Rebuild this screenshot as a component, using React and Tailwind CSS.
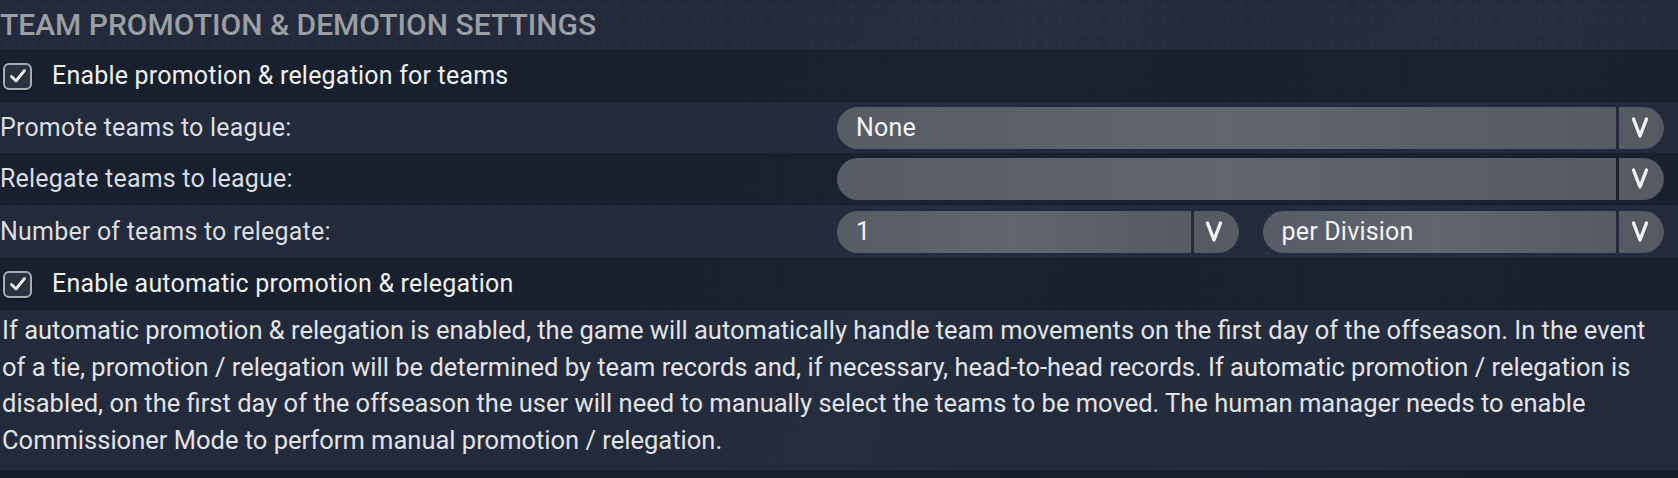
import React from 'react';

const Chevron = () => (
    <svg width="18" height="24" viewBox="0 0 18 24" className="block">
        <path d="M2.5 3 L9 20 L15.5 3" fill="none" stroke="#f2f2f2" strokeWidth="3.4" strokeLinecap="round" strokeLinejoin="round" />
    </svg>
);

function Dropdown({ value }) {
    return (
        <div className="flex h-[42px] flex-1 min-w-0">
            <div className="flex flex-1 items-center rounded-l-full bg-gradient-to-r from-[#575c66] via-[#60656f] to-[#555a63] pl-[19px] text-[25px] tracking-[0.2px] text-[#f4f4f4]">
                {value}
            </div>
            <div className="ml-[3px] flex w-[45px] items-center justify-center rounded-r-full bg-[#555a63] pr-[4px]">
                <Chevron />
            </div>
        </div>
    );
}

function Checkbox() {
    return (
        <div className="ml-[3px] flex h-[27px] w-[29px] items-center justify-center rounded-[6px] border-[2.5px] border-[#a9adb4] bg-[#2a3140] shadow-[0_1px_2px_rgba(0,0,0,0.6)]">
            <svg width="18" height="16" viewBox="0 0 18 16">
                <path d="M2.5 8.5 L7 13 L15.5 2.5" fill="none" stroke="#eeeeee" strokeWidth="2.8" strokeLinecap="round" strokeLinejoin="round" />
            </svg>
        </div>
    );
}

export default function App() {
    const light = 'bg-[#242c3d]/70';
    const dark = 'bg-[#141a27]/60';

    return (
        <div
            className="h-[478px] w-[1678px] overflow-hidden bg-[#1f2738] bg-[radial-gradient(circle,rgba(120,140,190,0.07)_2px,transparent_2.5px)] bg-[size:13px_13px]"
            style={{ fontFamily: 'Roboto, "Liberation Sans", sans-serif' }}
        >
            <div className="h-full w-full bg-[linear-gradient(115deg,transparent_40%,rgba(255,255,255,0.03)_55%,transparent_65%,rgba(255,255,255,0.025)_80%,transparent_90%)]">
                <div className="flex h-[50px] items-center bg-[#283042]/40 pb-[2px] text-[30px] font-medium text-[#9c9ea3]">
                    TEAM PROMOTION &amp; DEMOTION SETTINGS
                </div>

                <div className={`flex h-[52px] items-center gap-[20px] ${dark}`}>
                    <Checkbox />
                    <span className="text-[25px] tracking-[0.2px] text-[#f0f0f0]">Enable promotion &amp; relegation for teams</span>
                </div>

                <div className={`flex h-[51px] items-center pr-[14px] ${light}`}>
                    <span className="w-[837px] shrink-0 text-[25px] tracking-[0.2px] text-[#dcdde0]">Promote teams to league:</span>
                    <Dropdown value="None" />
                </div>

                <div className={`flex h-[52px] items-center pr-[14px] ${dark}`}>
                    <span className="w-[837px] shrink-0 text-[25px] tracking-[0.2px] text-[#dcdde0]">Relegate teams to league:</span>
                    <Dropdown value="" />
                </div>

                <div className={`flex h-[53px] items-center pr-[14px] ${light}`}>
                    <span className="w-[837px] shrink-0 text-[25px] tracking-[0.2px] text-[#dcdde0]">Number of teams to relegate:</span>
                    <div className="flex flex-1 gap-[24px]">
                        <Dropdown value="1" />
                        <Dropdown value="per Division" />
                    </div>
                </div>

                <div className={`flex h-[52px] items-center gap-[20px] ${dark}`}>
                    <Checkbox />
                    <span className="text-[25px] tracking-[0.2px] text-[#f0f0f0]">Enable automatic promotion &amp; relegation</span>
                </div>

                <div className={`h-[160px] pl-[2px] pr-[8px] pt-[2px] text-[25.5px] leading-[36.7px] text-[#e2e3e6] ${light}`}>
                    If automatic promotion &amp; relegation is enabled, the game will automatically handle team movements on the first day of the offseason. In the event of a tie, promotion / relegation will be determined by team records and, if necessary, head-to-head records. If automatic promotion / relegation is disabled, on the first day of the offseason the user will need to manually select the teams to be moved. The human manager needs to enable Commissioner Mode to perform manual promotion / relegation.
                </div>

                <div className="h-[8px] bg-[#141a27]/70" />
            </div>
        </div>
    );
}
